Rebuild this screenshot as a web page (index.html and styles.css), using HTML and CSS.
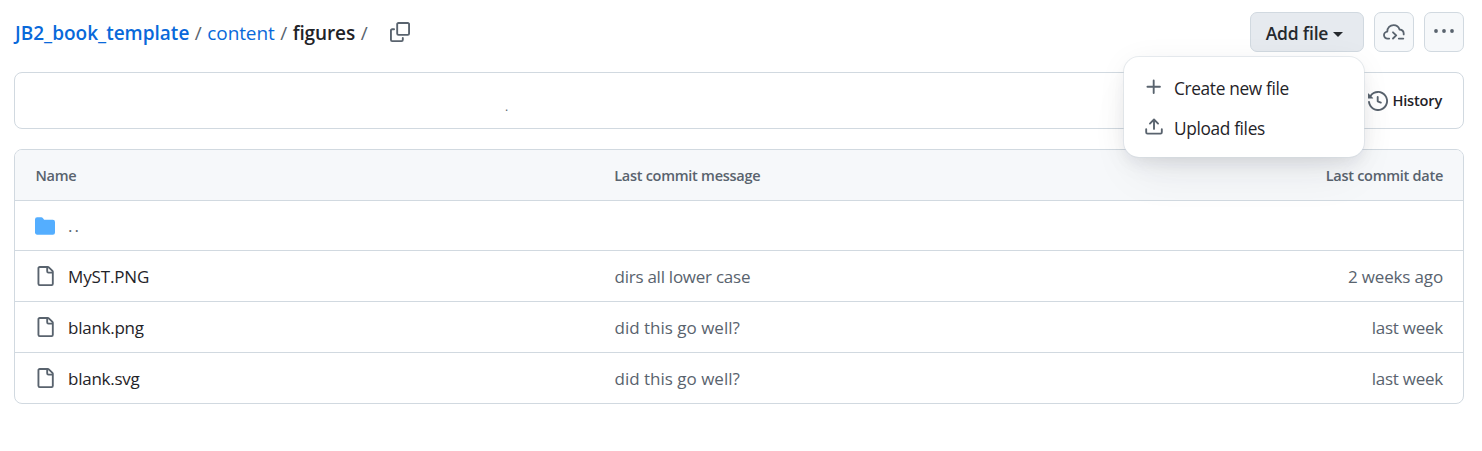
FILE: index.html
```html
<!DOCTYPE html>
<html lang="en">
<head>
<meta charset="utf-8">
<title>figures</title>
<link rel="stylesheet" href="styles.css">
</head>
<body>
<main class="page">
  <header class="topbar">
    <nav class="breadcrumb">
      <a class="crumb crumb-repo">JB2_book_template</a><span class="sep">/</span><a class="crumb crumb-dir">content</a><span class="sep">/</span><span class="crumb crumb-current">figures</span><span class="sep">/</span>
      <svg class="icon copy" viewBox="0 0 16 16"><path d="M0 6.75C0 5.784.784 5 1.75 5h1.5a.75.75 0 0 1 0 1.5h-1.5a.25.25 0 0 0-.25.25v7.5c0 .138.112.25.25.25h7.5a.25.25 0 0 0 .25-.25v-1.5a.75.75 0 0 1 1.5 0v1.5A1.75 1.75 0 0 1 9.25 16h-7.5A1.75 1.75 0 0 1 0 14.25Z"/><path d="M5 1.75C5 .784 5.784 0 6.75 0h7.5C15.216 0 16 .784 16 1.75v7.5A1.75 1.75 0 0 1 14.25 11h-7.5A1.75 1.75 0 0 1 5 9.25Zm1.75-.25a.25.25 0 0 0-.25.25v7.5c0 .138.112.25.25.25h7.5a.25.25 0 0 0 .25-.25v-7.5a.25.25 0 0 0-.25-.25Z"/></svg>
    </nav>
    <div class="actions">
      <div class="add-wrap">
        <button class="btn btn-add"><span>Add file</span><span class="caret"></span></button>
        <div class="menu">
          <div class="menu-item"><svg class="icon menu-icon" viewBox="0 0 16 16"><path d="M7.75 2a.75.75 0 0 1 .75.75V7h4.25a.75.75 0 0 1 0 1.5H8.5v4.25a.75.75 0 0 1-1.5 0V8.5H2.75a.75.75 0 0 1 0-1.5H7V2.75A.75.75 0 0 1 7.75 2Z"/></svg><span>Create new file</span></div>
          <div class="menu-item"><svg class="icon menu-icon" viewBox="0 0 16 16"><path d="M2.75 14A1.75 1.75 0 0 1 1 12.25v-2.5a.75.75 0 0 1 1.5 0v2.5c0 .138.112.25.25.25h10.5a.25.25 0 0 0 .25-.25v-2.5a.75.75 0 0 1 1.5 0v2.5A1.75 1.75 0 0 1 13.25 14Z"/><path d="M11.78 4.72a.749.749 0 1 1-1.06 1.06L8.75 3.811V9.5a.75.75 0 0 1-1.5 0V3.811L5.28 5.78a.749.749 0 1 1-1.06-1.06l3.25-3.25a.749.749 0 0 1 1.06 0l3.25 3.25Z"/></svg><span>Upload files</span></div>
        </div>
      </div>
      <button class="btn btn-icon"><svg class="icon cloud" viewBox="0 0 22 18"><path class="stroke" d="M6.2 15.6H4.7A3.5 3.5 0 0 1 4.3 8.6C4.3 4.9 7 2.1 10.6 2.1C13.5 2.1 15.7 3.9 16.5 6.5C19.1 6.7 20.7 8.5 20.7 10.6V11.4M10 9.3L13.2 12.4L10 15.5M15.8 15.6H20.3"/></svg></button>
      <button class="btn btn-icon"><svg class="icon kebab" viewBox="0 0 20 20"><circle cx="2" cy="9" r="1.9"/><circle cx="10" cy="9" r="1.9"/><circle cx="18" cy="9" r="1.9"/></svg></button>
    </div>
  </header>

  <section class="commit-bar">
    <span class="commit-text">.</span>
    <a class="history"><svg class="icon history-icon" viewBox="0 0 16 16"><path d="m.427 1.927 1.215 1.215a8.002 8.002 0 1 1-1.6 5.685.75.75 0 1 1 1.493-.154 6.5 6.5 0 1 0 1.18-4.458l1.358 1.358A.25.25 0 0 1 3.896 6H.25A.25.25 0 0 1 0 5.75V2.104a.25.25 0 0 1 .427-.177ZM7.75 4a.75.75 0 0 1 .75.75v2.992l2.028.812a.75.75 0 0 1-.557 1.392l-2.5-1A.751.751 0 0 1 7 8.25v-3.5A.75.75 0 0 1 7.75 4Z"/></svg><span>History</span></a>
  </section>

  <section class="files">
    <div class="row head"><span class="name">Name</span><span class="msg">Last commit message</span><span class="date">Last commit date</span></div>
    <div class="row up"><span class="name"><svg class="icon folder" viewBox="0 0 16 16"><path d="M1.75 1A1.75 1.75 0 0 0 0 2.75v10.5C0 14.216.784 15 1.75 15h12.5A1.75 1.75 0 0 0 16 13.25v-8.5A1.75 1.75 0 0 0 14.25 3H7.5a.25.25 0 0 1-.2-.1l-.9-1.2C6.07 1.26 5.55 1 5 1H1.75Z"/></svg><span class="dots">..</span></span></div>
    <div class="row"><span class="name"><svg class="icon file" viewBox="0 0 16 16"><path d="M2 1.75C2 .784 2.784 0 3.75 0h6.586c.464 0 .909.184 1.237.513l2.914 2.914c.329.328.513.773.513 1.237v9.586A1.75 1.75 0 0 1 13.25 16h-9.5A1.75 1.75 0 0 1 2 14.25Zm1.75-.25a.25.25 0 0 0-.25.25v12.5c0 .138.112.25.25.25h9.5a.25.25 0 0 0 .25-.25V6h-2.75A1.75 1.75 0 0 1 9 4.25V1.5Zm6.75.062V4.25c0 .138.112.25.25.25h2.688l-.011-.013-2.914-2.914-.013-.011Z"/></svg><span>MyST.PNG</span></span><span class="msg tight">dirs all lower case</span><span class="date">2 weeks ago</span></div>
    <div class="row"><span class="name"><svg class="icon file" viewBox="0 0 16 16"><path d="M2 1.75C2 .784 2.784 0 3.75 0h6.586c.464 0 .909.184 1.237.513l2.914 2.914c.329.328.513.773.513 1.237v9.586A1.75 1.75 0 0 1 13.25 16h-9.5A1.75 1.75 0 0 1 2 14.25Zm1.75-.25a.25.25 0 0 0-.25.25v12.5c0 .138.112.25.25.25h9.5a.25.25 0 0 0 .25-.25V6h-2.75A1.75 1.75 0 0 1 9 4.25V1.5Zm6.75.062V4.25c0 .138.112.25.25.25h2.688l-.011-.013-2.914-2.914-.013-.011Z"/></svg><span class="tight">blank.png</span></span><span class="msg loose">did this go well?</span><span class="date tight">last week</span></div>
    <div class="row"><span class="name"><svg class="icon file" viewBox="0 0 16 16"><path d="M2 1.75C2 .784 2.784 0 3.75 0h6.586c.464 0 .909.184 1.237.513l2.914 2.914c.329.328.513.773.513 1.237v9.586A1.75 1.75 0 0 1 13.25 16h-9.5A1.75 1.75 0 0 1 2 14.25Zm1.75-.25a.25.25 0 0 0-.25.25v12.5c0 .138.112.25.25.25h9.5a.25.25 0 0 0 .25-.25V6h-2.75A1.75 1.75 0 0 1 9 4.25V1.5Zm6.75.062V4.25c0 .138.112.25.25.25h2.688l-.011-.013-2.914-2.914-.013-.011Z"/></svg><span class="tight">blank.svg</span></span><span class="msg loose">did this go well?</span><span class="date tight">last week</span></div>
  </section>
</main>
</body>
</html>
```
FILE: styles.css
```css
* { box-sizing: border-box; }
body { margin: 0; background: #fff; color: #1f2328; font-family: "Open Sans", "Noto Sans", sans-serif; font-size: 17px; }
.page { padding: 12px 18px 0 14px; }
.icon { display: block; flex: none; fill: #59636e; }
.topbar { display: flex; justify-content: space-between; height: 40px; }
.breadcrumb { display: flex; align-items: center; font-size: 19px; line-height: 28px; padding: 2px 0 0 1px; white-space: nowrap; }
.crumb-repo { color: #0969da; font-weight: 600; }
.crumb-dir { color: #0969da; letter-spacing: -0.1px; }
.crumb-current { font-weight: 600; letter-spacing: -0.1px; }
.sep { color: #59636e; padding: 0 5.5px; }
.copy { width: 20px; height: 20px; margin: -3px 0 0 17px; }
.actions { display: flex; gap: 10px; }
.add-wrap { position: relative; }
.btn { display: flex; align-items: center; justify-content: center; height: 40px; padding: 0; border: 1px solid #d1d9e0; border-radius: 7px; background: #f6f8fa; color: #25292e; font: 600 17.5px "Open Sans", sans-serif; }
.btn-add { width: 114px; background: #e6eaef; gap: 5px; padding: 2px 5px 0 0; letter-spacing: -0.2px; }
.caret { border: 5px solid transparent; border-top-color: #25292e; border-bottom: 0; margin-top: 2px; }
.btn-icon { width: 40px; }
.cloud { width: 22px; height: 18px; margin-top: -1px; }
.stroke { fill: none; stroke: #59636e; stroke-width: 1.8; stroke-linecap: round; stroke-linejoin: round; }
.kebab { width: 20px; height: 20px; }
.menu { position: absolute; z-index: 2; top: 45px; right: 0; width: 240px; height: 100px; padding: 11px 20px; border-radius: 15px; background: #fff; box-shadow: 0 0 0 1px #d1d9e080, 0 8px 16px -4px #25292e14, 0 4px 32px -4px #25292e14, 0 24px 48px -12px #25292e14; }
.menu-item { display: flex; align-items: center; gap: 10px; height: 40px; font-size: 17.3px; letter-spacing: -0.35px; white-space: nowrap; }
.menu-icon { width: 20px; height: 20px; margin-top: -3px; }
.commit-bar { display: flex; align-items: center; justify-content: space-between; height: 57px; margin-top: 20px; padding: 0 21px 0 490px; border: 1px solid #d1d9e0; border-radius: 8px; }
.commit-text { font-size: 12px; padding-top: 12px; color: #59636e; }
.history { display: flex; align-items: center; gap: 4px; font-size: 14.6px; font-weight: 600; letter-spacing: -0.2px; }
.history span { margin-top: -2px; }
.history-icon { width: 20px; height: 20px; }
.files { margin-top: 20px; border: 1px solid #d1d9e0; border-radius: 8px; overflow: hidden; }
.row { display: grid; grid-template-columns: 579.5px 1fr auto; align-items: center; height: 51px; padding: 0 20px; border-top: 1px solid #d1d9e0; white-space: nowrap; letter-spacing: -0.15px; }
.row.head { height: 50px; padding-left: 20.5px; grid-template-columns: 578.7px 1fr auto; border-top: 0; background: #f6f8fa; color: #59636e; font-size: 14.5px; font-weight: 600; letter-spacing: -0.27px; }
.row.up { height: 50px; }
.name { display: flex; align-items: center; gap: 13px; }
.file, .folder { width: 20px; height: 20px; }
.folder { fill: #54aeff; }
.msg, .date { color: #59636e; }
.row .tight { letter-spacing: -0.25px; }
.loose { letter-spacing: 0; }
.dots { color: #59636e; letter-spacing: 2px; }
```
